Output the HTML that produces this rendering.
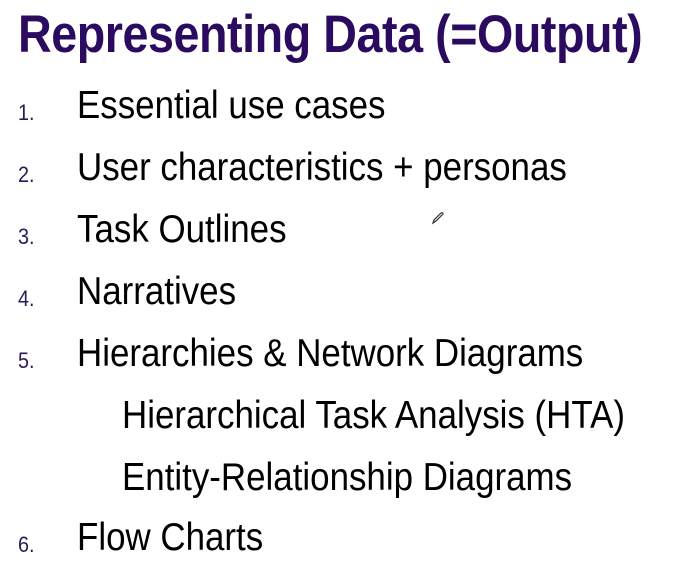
<!DOCTYPE html>
<html><head><style>
body{margin:0;width:695px;height:578px;background:#fff;overflow:hidden;font-family:"Liberation Sans",Arial,sans-serif;position:relative}
.t{position:absolute;left:18px;top:4px;font-size:53px;font-weight:bold;color:#2b0b5f;white-space:nowrap;transform:scaleX(0.88);transform-origin:left top;letter-spacing:-0.5px}
.n{position:absolute;left:18px;font-size:22px;color:#2b1a55;transform:scaleX(0.9);transform-origin:left top}
.i{position:absolute;font-size:39px;color:#000;white-space:nowrap;transform:scaleX(0.895);transform-origin:left top}
</style></head><body>
<div class="t">Representing Data (=Output)</div>
<div class="n" style="top:100px">1.</div><div class="i" style="left:77px;top:84px">Essential use cases</div>
<div class="n" style="top:162px">2.</div><div class="i" style="left:77px;top:146px">User characteristics + personas</div>
<div class="n" style="top:224px">3.</div><div class="i" style="left:77px;top:208px">Task Outlines</div>
<div class="n" style="top:286px">4.</div><div class="i" style="left:77px;top:270px">Narratives</div>
<div class="n" style="top:348px">5.</div><div class="i" style="left:77px;top:332px">Hierarchies &amp; Network Diagrams</div>
<div class="i" style="left:122px;top:394px">Hierarchical Task Analysis (HTA)</div>
<div class="i" style="left:122px;top:456px">Entity-Relationship Diagrams</div>
<div class="n" style="top:532px">6.</div><div class="i" style="left:77px;top:516px">Flow Charts</div>
<svg style="position:absolute;left:430px;top:210px" width="16" height="16" viewBox="0 0 16 16"><path d="M3 13 L4 10 L11 3 Q13 2 13 4 L6 11 Z" fill="none" stroke="#333" stroke-width="1.2"/></svg>
</body></html>
